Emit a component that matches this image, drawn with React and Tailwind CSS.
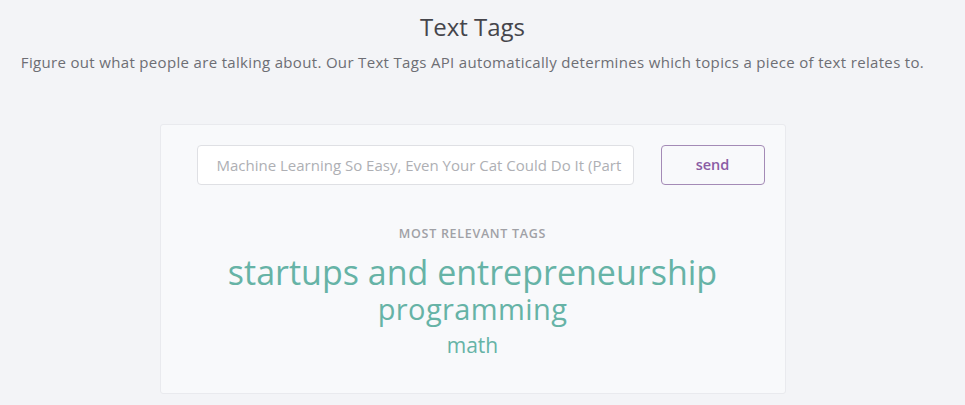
import { useState } from 'react';

const tags = [
  { name: 'startups and entrepreneurship', size: 'text-[34px] leading-[38px]' },
  { name: 'programming', size: 'text-[29px] leading-[36px] tracking-[0.4px]' },
  { name: 'math', size: 'text-[21px] leading-[36px]' },
];

export default function App() {
  const [text, setText] = useState('');

  return (
    <div className="min-h-screen bg-[#f3f4f7] font-['Open_Sans',sans-serif] text-[#4a4a4f]">
      <div className="w-[945px] pb-[12px]">

        {/* Header */}
        <div className="pt-[12px] text-center">
          <h1 className="text-[24px] leading-[30px] text-[#45454b]">Text Tags</h1>
          <p className="mt-[9px] text-[15px] leading-[22px] tracking-[0.33px] text-[#6d6e74]">
            Figure out what people are talking about. Our Text Tags API automatically determines which topics a piece of text relates to.
          </p>
        </div>

        {/* Demo card */}
        <div className="mx-auto mt-[51px] w-[626px] h-[270px] bg-[#f8f9fb] border border-[#e9eaee] rounded-[3px] pl-[36px] pt-[20px]">
          <div className="flex items-center gap-[27px]">
            <input
              className="w-[437px] h-[40px] shrink-0 bg-white border border-[#dfe0e4] rounded-[4px] pl-[19px] pr-[10px] text-[15px] text-[#555] placeholder:text-[#aeafb4] outline-none"
              placeholder="Machine Learning So Easy, Even Your Cat Could Do It (Part 1)"
              value={text}
              onChange={e => setText(e.target.value)}
            />
            <button className="w-[104px] h-[40px] shrink-0 border border-[#a48bb6] rounded-[4px] text-[14.5px] font-semibold text-[#8a5ca4] bg-transparent">
              send
            </button>
          </div>

          {/* Results */}
          <div className="mt-[41px] pr-[36px] text-center">
            <div className="text-[12.5px] leading-[16px] font-semibold tracking-[0.7px] uppercase text-[#a0a1a6]">
              Most relevant tags
            </div>
            <div className="mt-[11px] flex flex-col items-center text-[#66b3a6]">
              {tags.map(t => (
                <span key={t.name} className={t.size}>{t.name}</span>
              ))}
            </div>
          </div>
        </div>
      </div>
    </div>
  );
}
